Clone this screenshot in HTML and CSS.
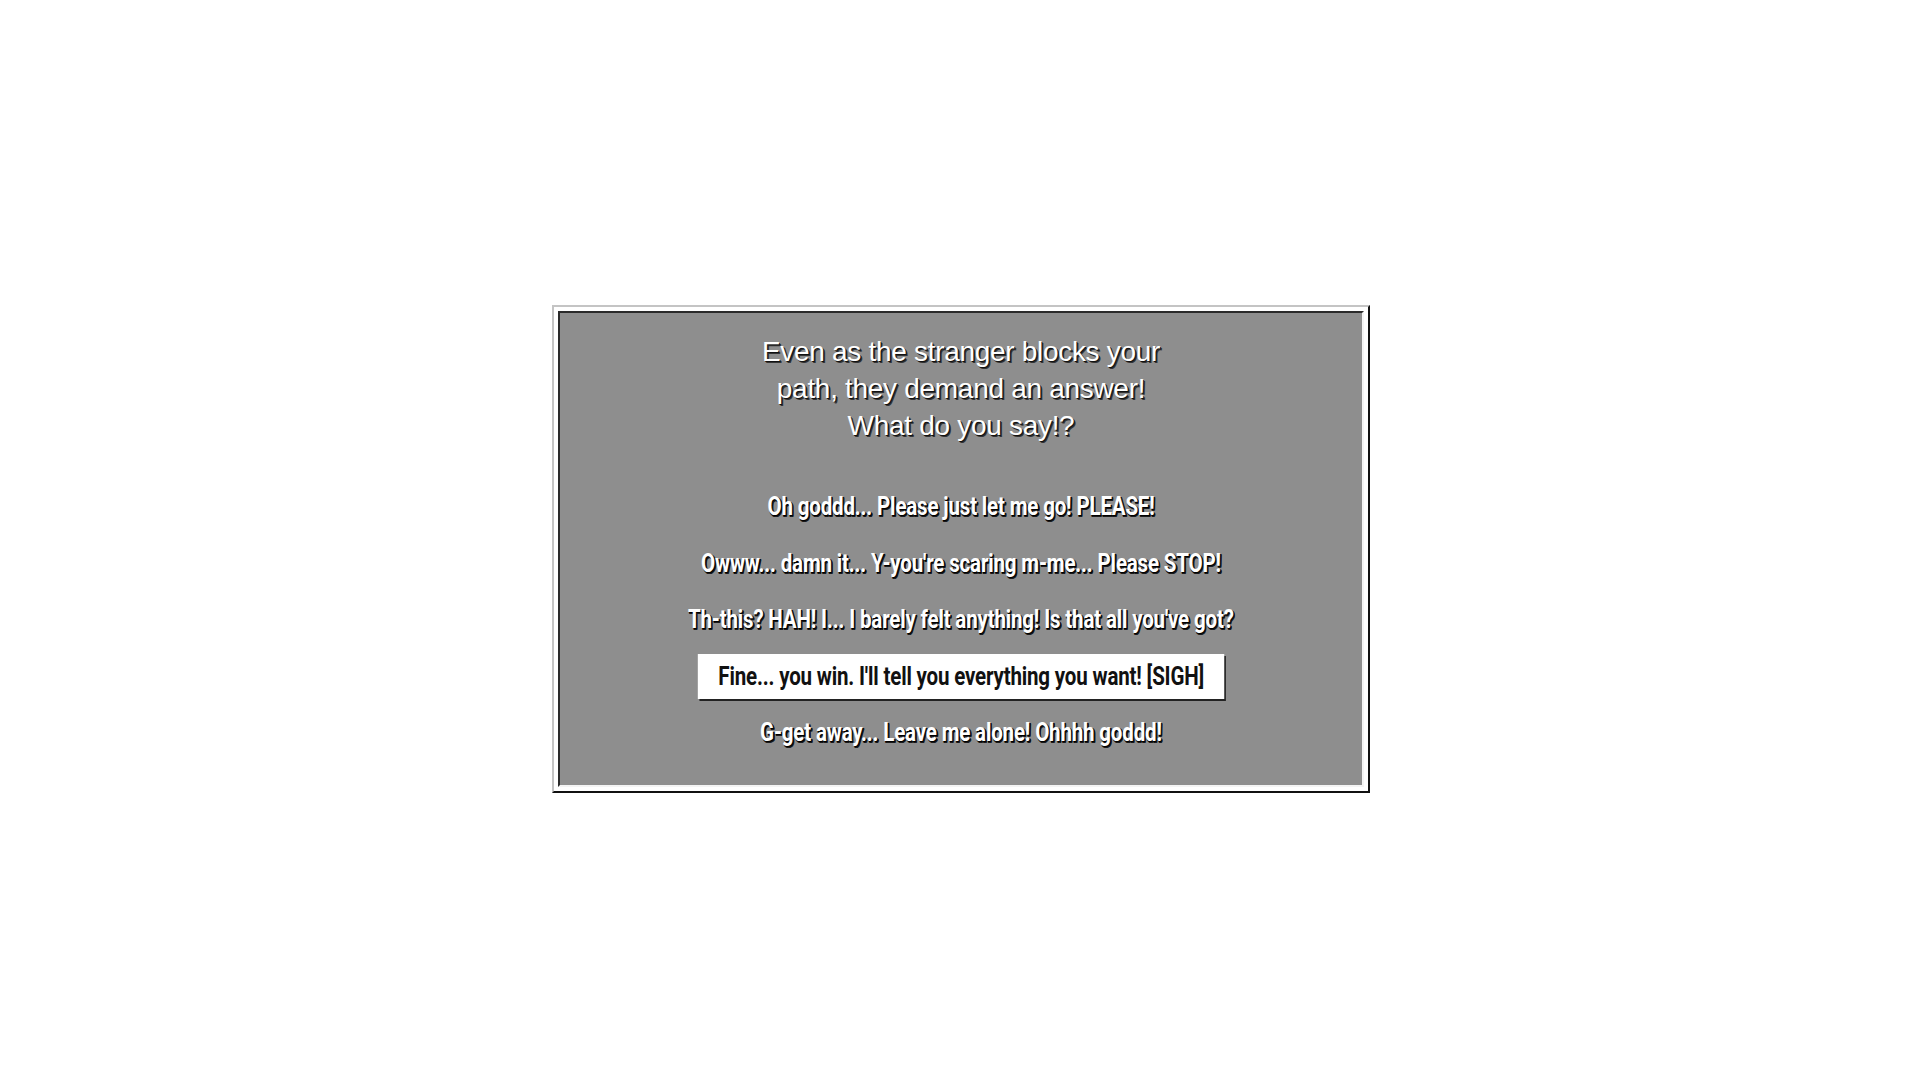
FILE: index.html
```html
<!DOCTYPE html>
<html lang="en">
<head>
<meta charset="utf-8">
<title>Dialogue</title>
<link rel="stylesheet" href="styles.css">
</head>
<body>
  <div class="stage">
    <div class="frame">
      <div class="panel">
        <p class="prompt">Even as the stranger blocks your<br>path, they demand an answer!<br>What do you say!?</p>
        <ul class="choices">
          <li class="choice">Oh goddd... Please just let me go! PLEASE!</li>
          <li class="choice">Owww... damn it... Y-you're scaring m-me... Please STOP!</li>
          <li class="choice">Th-this? HAH! I... I barely felt anything! Is that all you've got?</li>
          <li class="choice selected">Fine... you win. I'll tell you everything you want! [SIGH]</li>
          <li class="choice">G-get away... Leave me alone! Ohhhh goddd!</li>
        </ul>
      </div>
    </div>
  </div>
</body>
</html>
```

FILE: styles.css
```css
html, body {
  margin: 0;
  padding: 0;
  background: #ffffff;
}

.stage {
  display: flex;
  justify-content: center;
  padding-top: 305px;
  padding-left: 2px;
}

.frame {
  width: 806px;
  border: 2px solid;
  border-color: #c4c4c4 #111111 #111111 #c4c4c4;
  padding: 4px;
  background: #ffffff;
}

.panel {
  border: 2px solid;
  border-color: #2a2a2a #f4f4f4 #f4f4f4 #2a2a2a;
  background: #8e8e8e;
  height: 476px;
  box-sizing: border-box;
  padding-top: 20px;
  display: flex;
  flex-direction: column;
  align-items: center;
}

.prompt {
  margin: 0;
  font-family: "Liberation Sans", Arial, sans-serif;
  font-size: 28px;
  line-height: 37px;
  color: #ffffff;
  text-align: center;
  letter-spacing: -0.3px;
  text-shadow: 1px 1px 0 #111, 2px 2px 0 #333;
}

.choices {
  list-style: none;
  margin: 40px 0 0 0;
  padding: 0;
  display: flex;
  flex-direction: column;
  align-items: center;
  gap: 11.6px;
}

.choice {
  display: inline-block;
  height: 45px;
  line-height: 45px;
  padding: 0 25px;
  font-family: Roboto, "Liberation Sans", sans-serif;
  font-weight: 700;
  font-size: 25px;
  letter-spacing: -0.2px;
  color: #ffffff;
  white-space: nowrap;
  transform: scaleX(0.82);
  text-shadow: 1px 1px 0 #000, 2px 2px 0 #1a1a1a, 1px 2px 0 #111, 2px 1px 0 #111;
}

.choice.selected {
  background: #ffffff;
  color: #111111;
  text-shadow: none;
  box-shadow: 2px 2px 0 #222222;
}
```
